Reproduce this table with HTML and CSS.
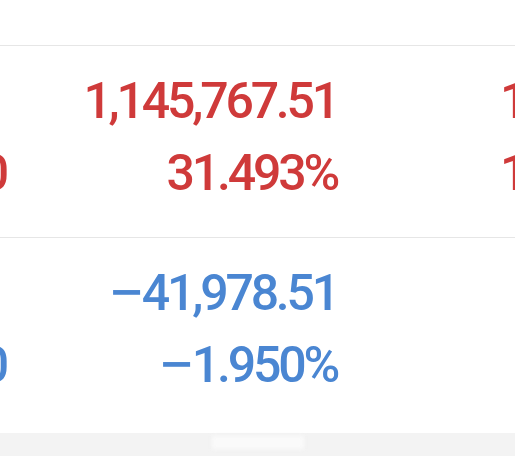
FILE: index.html
```html
<!DOCTYPE html>
<html>
<head>
<meta charset="utf-8">
<link rel="stylesheet" href="styles.css">
</head>
<body>
<div class="page">
  <div class="header"></div>
  <div class="row row-up">
    <div class="cell c1"><div class="line"></div><div class="line">10.00</div></div>
    <div class="cell c2"><div class="line">1,145,767.51</div><div class="line">31.493%</div></div>
    <div class="cell c3"><div class="line">1,000,000.00</div><div class="line">12.345%</div></div>
  </div>
  <div class="row row-down">
    <div class="cell c1"><div class="line"></div><div class="line">10.00</div></div>
    <div class="cell c2"><div class="line"><span class="sign">−</span>41,978.51</div><div class="line"><span class="sign">−</span>1.950%</div></div>
    <div class="cell c3"><div class="line"></div><div class="line"></div></div>
  </div>
  <div class="footer"><div class="blob"></div></div>
</div>
</body>
</html>
```
FILE: styles.css
```css
html, body {
  margin: 0;
  padding: 0;
  background: #ffffff;
  overflow: hidden;
}
.page {
  width: 515px;
  height: 456px;
  display: flex;
  flex-direction: column;
  overflow: hidden;
  font-family: Roboto, "Liberation Sans", sans-serif;
  font-weight: 500;
}
.header {
  height: 45px;
  border-bottom: 1px solid #e6e6e6;
  flex: none;
}
.row {
  display: grid;
  grid-template-columns: 6px 331px 1fr;
  padding-top: 19px;
  box-sizing: border-box;
  flex: none;
  font-size: 50px;
  line-height: 72px;
  letter-spacing: -3.2px;
}
.row-up {
  height: 192px;
  border-bottom: 1px solid #e6e6e6;
  color: #cf3a3a;
}
.row-down {
  height: 195px;
  color: #4a86d2;
}
.line {
  height: 72px;
  white-space: nowrap;
}
.sign {
  display: inline-block;
  letter-spacing: 0;
  margin-right: 6px;
  transform: scaleX(1.3);
  transform-origin: left center;
}
.c1 {
  display: flex;
  flex-direction: column;
  align-items: flex-end;
}
.c2 {
  text-align: right;
}
.c3 {
  padding-left: 163px;
}
.footer {
  flex: 1;
  background: #f3f3f3;
  position: relative;
}
.blob {
  position: absolute;
  left: 212px;
  top: 3px;
  width: 92px;
  height: 13px;
  background: #fafafa;
  filter: blur(2px);
}
```
